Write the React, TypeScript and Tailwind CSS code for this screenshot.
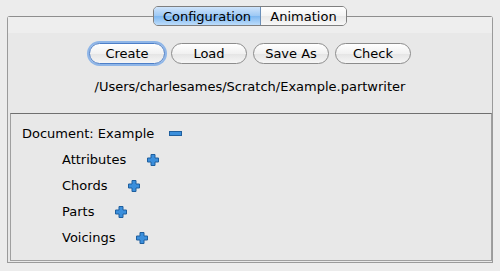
import React from "react";

const font = { fontFamily: '"DejaVu Sans", "Liberation Sans", sans-serif' };

function PlusIcon() {
  return (
    <svg width="12" height="12" viewBox="0 0 12 12" className="shrink-0">
      <path
        d="M4 0.5h4v3.5h3.5v4h-3.5v3.5h-4v-3.5h-3.5v-4h3.5z"
        fill="#3b8fdc"
        stroke="#1f5f9e"
        strokeWidth="1"
      />
    </svg>
  );
}

function MinusIcon() {
  return (
    <svg width="13" height="5" viewBox="0 0 13 5" className="shrink-0">
      <rect x="0.5" y="0.5" width="12" height="4" fill="#3b8fdc" stroke="#1f5f9e" strokeWidth="1" />
    </svg>
  );
}

function PillButton({ label, focused }: { label: string; focused?: boolean }) {
  return (
    <button
      type="button"
      className={`w-[76px] h-[21px] rounded-full text-[13px] leading-none text-black flex items-center justify-center bg-[linear-gradient(#ffffff,#f1f1f1_50%,#e4e4e4_51%,#f6f6f6)] border ${
        focused
          ? "border-[#4d7fc8] shadow-[0_0_0_2px_#8fb6e8]"
          : "border-[#8c8c8c]"
      }`}
      style={font}
    >
      {label}
    </button>
  );
}

function TreeRow({ label }: { label: string }) {
  return (
    <div className="h-[26px] flex items-center gap-[21px] pl-[51px]">
      <span className="text-[13px] text-black">{label}</span>
      <PlusIcon />
    </div>
  );
}

export default function App() {
  return (
    <div className="w-[500px] h-[271px] bg-[#ececec] pt-[6px] overflow-hidden" style={font}>
      {/* Segmented tabs */}
      <div className="relative z-10 flex justify-center">
        <div className="flex h-[20px] rounded-[5px] border border-[#7f7f7f] overflow-hidden text-[13px] leading-none">
          <div className="w-[107px] flex items-center justify-center bg-[linear-gradient(#cfe4fb,#9cc8f4_50%,#7db7f0_51%,#bcdcfb)] border-r border-[#6b8fb8] text-black">
            Configuration
          </div>
          <div className="w-[85px] flex items-center justify-center bg-[linear-gradient(#ffffff,#f3f3f3_50%,#e8e8e8_51%,#f7f7f7)] text-black">
            Animation
          </div>
        </div>
      </div>

      {/* Tab body */}
      <div className="-mt-[10px] ml-[7px] w-[486px] h-[247px] border border-[#9a9a9a] border-t-[#8e8e8e] rounded-t-[3px] bg-[#e8e8e8] flex flex-col">
        <div className="h-[16px] bg-[#eeeeee]" />
        <div className="flex justify-center gap-[6px] mt-[10px]">
          <PillButton label="Create" focused />
          <PillButton label="Load" />
          <PillButton label="Save As" />
          <PillButton label="Check" />
        </div>
        <div className="mt-[13px] text-center text-[13px] text-black">
          /Users/charlesames/Scratch/Example.partwriter
        </div>
        <div className="mt-[16px] ml-[2px] flex-1 mb-[1px] border border-[#9f9f9f] border-t-[#6f6f6f] bg-[#e8e8e8] pt-[7px] flex flex-col">
          <div className="h-[26px] flex items-center gap-[15px] pl-[11px]">
            <span className="text-[13px] text-black">Document: Example</span>
            <MinusIcon />
          </div>
          <TreeRow label="Attributes" />
          <TreeRow label="Chords" />
          <TreeRow label="Parts" />
          <TreeRow label="Voicings" />
        </div>
      </div>
    </div>
  );
}
